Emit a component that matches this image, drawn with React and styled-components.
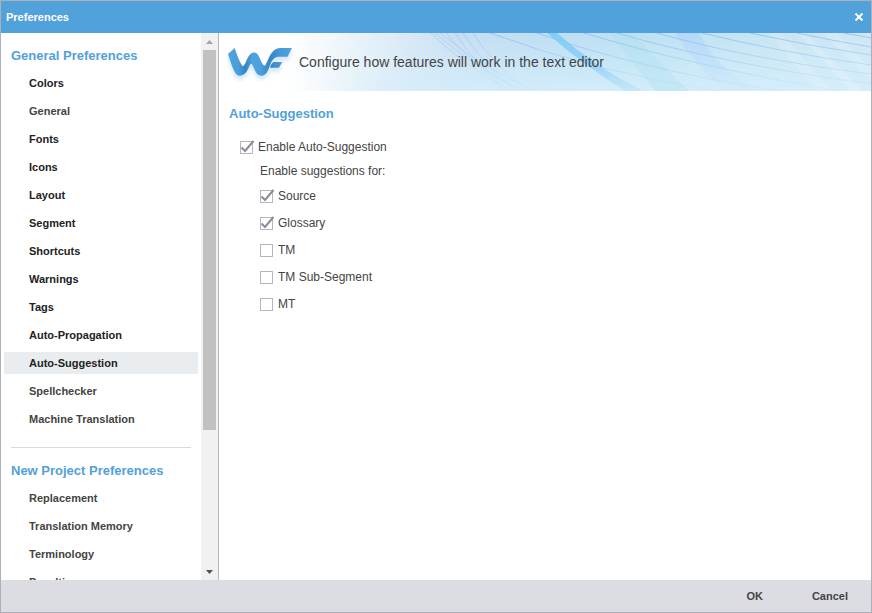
import React, { useState } from 'react'
import styled, { createGlobalStyle } from 'styled-components'

const GlobalStyle = createGlobalStyle`
  * {
    box-sizing: border-box;
  }

  body {
    margin: 0;
    color: #444444;
    font-family: 'Liberation Sans', Arial, sans-serif;
    font-size: 12px;
  }
`

const Dialog = styled.div`
  display: flex;
  flex-direction: column;
  height: 100vh;
  border: 1px solid #aeafb9;
  background-color: white;
`

const TitleBar = styled.header`
  display: flex;
  align-items: center;
  justify-content: space-between;
  height: 32px;
  padding: 0 7px 0 5px;
  flex-shrink: 0;
  background-color: #51a1db;
  color: white;
`

const Title = styled.h1`
  margin: 0;
  font-size: 11px;
  line-height: 14px;
`

const CloseButton = styled.button`
  display: flex;
  padding: 0;
  border: none;
  background: none;
  color: white;
  cursor: pointer;
`

const Body = styled.div`
  display: flex;
  flex: 1;
  min-height: 0;
`

const Sidebar = styled.aside`
  display: flex;
  width: 218px;
  flex-shrink: 0;
  border-right: 1px solid #b4b5c0;
`

const Nav = styled.nav`
  flex: 1;
  padding: 12px 3px 0;
  overflow-y: auto;
  scrollbar-width: none;
`

const Heading = styled.h2`
  margin: 0;
  color: #51a1db;
  font-size: 13px;
  line-height: 22px;
`

const NavHeading = styled(Heading)`
  padding-left: 7px;
`

const NavList = styled.ul`
  display: flex;
  flex-direction: column;
  gap: 6px;
  margin: 5px 0 0;
  padding: 0;
  list-style: none;
`

const NavLink = styled.a`
  display: block;
  padding-left: 25px;
  background-color: ${props => (props.$active ? '#e9edf0' : 'transparent')};
  color: ${props => (props.$dark ? '#222222' : '#444444')};
  font-size: 11px;
  font-weight: bold;
  line-height: 22px;
  text-decoration: none;
`

const Divider = styled.hr`
  height: 1px;
  margin: 17px 7px 12px;
  border: none;
  background-color: #d9dadd;
`

const ScrollTrack = styled.div`
  display: flex;
  flex-direction: column;
  align-items: center;
  width: 17px;
  background-color: #f1f1f1;
`

const ScrollArrow = styled.button`
  display: flex;
  align-items: center;
  justify-content: center;
  width: 17px;
  height: 17px;
  padding: 0;
  border: none;
  background: none;
  color: ${props => (props.disabled ? '#a3a3a3' : '#505050')};
`

const ScrollRail = styled.div`
  flex: 1;
  width: 13px;
`

const ScrollThumb = styled.div`
  height: 74%;
  background-color: #c1c1c1;
`

const Main = styled.main`
  flex: 1;
  min-width: 0;
`

const Banner = styled.div`
  display: flex;
  align-items: center;
  gap: 5px;
  position: relative;
  height: 58px;
  padding-left: 7px;
  overflow: hidden;
`

const BannerArt = styled.svg`
  position: absolute;
  inset: 0;
  width: 100%;
  height: 100%;
`

const LogoMark = styled.svg`
  position: relative;
  flex-shrink: 0;
`

const BannerText = styled.p`
  position: relative;
  margin: 0;
  font-size: 14px;
  line-height: 20px;
`

const Section = styled.section`
  padding: 12px 10px;
`

const Options = styled.div`
  display: flex;
  flex-direction: column;
  align-items: flex-start;
  gap: 4px;
  padding: 12px 0 0 11px;
`

const SubOptions = styled.fieldset`
  display: flex;
  flex-direction: column;
  align-items: flex-start;
  gap: 7px;
  margin: 0;
  padding: 0 0 0 20px;
  border: none;
`

const Legend = styled.legend`
  margin-bottom: 5px;
  padding: 0;
  line-height: 20px;
`

const CheckLabel = styled.label`
  display: flex;
  align-items: center;
  gap: 5px;
  line-height: 20px;
`

const CheckMark = styled.span`
  display: grid;

  > * {
    grid-area: 1 / 1;
  }
`

const CheckInput = styled.input`
  appearance: none;
  width: 13px;
  height: 13px;
  margin: 1px 0 0;
  border: 1px solid #b4b5c0;
  background-color: white;
`

const Tick = styled.svg`
  pointer-events: none;
  overflow: visible;
`

const Footer = styled.footer`
  display: flex;
  align-items: center;
  justify-content: flex-end;
  gap: 49px;
  height: 32px;
  padding-right: 23px;
  flex-shrink: 0;
  background-color: #dcdde2;
`

const FooterButton = styled.button`
  padding: 0;
  border: none;
  background: none;
  color: #444444;
  font-family: inherit;
  font-size: 11px;
  font-weight: bold;
  line-height: 20px;
`

const generalItems = [
  { name: 'Colors', dark: true },
  { name: 'General' },
  { name: 'Fonts', dark: true },
  { name: 'Icons', dark: true },
  { name: 'Layout', dark: true },
  { name: 'Segment', dark: true },
  { name: 'Shortcuts', dark: true },
  { name: 'Warnings', dark: true },
  { name: 'Tags', dark: true },
  { name: 'Auto-Propagation', dark: true },
  { name: 'Auto-Suggestion', dark: true },
  { name: 'Spellchecker' },
  { name: 'Machine Translation' }
]

const projectItems = [
  { name: 'Replacement' },
  { name: 'Translation Memory' },
  { name: 'Terminology' },
  { name: 'Penalties' }
]

// steep lines that cross behind the banner text
const bundleLines = [
  'M212 0 Q244 32 292 58',
  'M216 0 Q252 32 304 58',
  'M221 0 Q262 34 316 58',
  'M227 0 Q250 30 300 58',
  'M236 0 Q256 30 286 58',
  'M244 0 Q264 32 298 58',
  'M254 0 Q272 30 310 58'
]

// flatter lines that sweep to the right edge
const sweepLines = [
  'M271 0 Q380 40 500 58',
  'M318 0 Q420 36 560 58',
  'M365 0 Q470 32 620 58',
  'M398 0 Q500 30 652 51',
  'M438 0 Q530 26 652 41',
  'M483 0 Q560 19 652 32',
  'M531 0 Q590 13 652 22',
  'M578 0 Q615 8 652 14',
  'M625 0 L652 5'
]

function NavGroup({ title, items, active }) {
  return (
    <>
      <NavHeading>{title}</NavHeading>
      <NavList>
        {items.map(({ name, dark }) => (
          <li key={name}>
            <NavLink href='#' $dark={dark} $active={name === active}>
              {name}
            </NavLink>
          </li>
        ))}
      </NavList>
    </>
  )
}

function Scrollbar() {
  return (
    <ScrollTrack>
      <ScrollArrow aria-label='Scroll up' disabled>
        <svg width='7' height='4'>
          <path d='M0 4 L3.5 0 L7 4 Z' fill='currentColor' />
        </svg>
      </ScrollArrow>
      <ScrollRail>
        <ScrollThumb />
      </ScrollRail>
      <ScrollArrow aria-label='Scroll down'>
        <svg width='7' height='4'>
          <path d='M0 0 L3.5 4 L7 0 Z' fill='currentColor' />
        </svg>
      </ScrollArrow>
    </ScrollTrack>
  )
}

function Checkbox({ label, defaultChecked = false }) {
  const [checked, setChecked] = useState(defaultChecked)

  return (
    <CheckLabel>
      <CheckMark>
        <CheckInput
          type='checkbox'
          checked={checked}
          onChange={e => setChecked(e.target.checked)}
        />
        {checked && (
          <Tick width='13' height='14' viewBox='0 0 13 14' fill='none'>
            <path d='M1.5 7.5 L5 11 L13.5 1' stroke='#8b8c96' strokeWidth='2' />
          </Tick>
        )}
      </CheckMark>
      {label}
    </CheckLabel>
  )
}

function Logo() {
  return (
    <LogoMark width='68' height='40' viewBox='0 0 68 40' aria-hidden='true'>
      <defs>
        <linearGradient id='logo' gradientUnits='userSpaceOnUse' x1='2' y1='0' x2='66' y2='0'>
          <stop offset='0' stopColor='#4fa3df' />
          <stop offset='0.16' stopColor='#4a9edb' />
          <stop offset='0.27' stopColor='#3784c1' />
          <stop offset='0.38' stopColor='#4fa3df' />
          <stop offset='0.52' stopColor='#4a9edb' />
          <stop offset='0.66' stopColor='#3784c1' />
          <stop offset='0.8' stopColor='#4598d5' />
          <stop offset='1' stopColor='#4fa3df' />
        </linearGradient>
        <filter id='soft' x='-20%' y='-20%' width='140%' height='150%'>
          <feGaussianBlur stdDeviation='2' />
        </filter>
        <g id='mark'>
          <path d='M2 12 L8.7 6 C11 13 13 19 16 23.5 C17.3 25 18.4 23 19.5 21 C22 15 24 10.5 28 10.5 C32 10.5 33 15 35 19 C37 23.5 38.5 25 40 22 C43 16 46 6 54 6 H66 L61.5 14.8 H53 C47 15 45 20 43 26 C41 31 39 33.7 35.5 33.7 C31 33.7 29 29 27 24 C25.5 20.5 24.5 21 23 25 C21 30 18 33.7 13.5 33.7 C8.5 33.7 6 24 2 12 Z' />
          <path d='M48 20 H56.3 L53 25.7 H44 Q45 21 48 20 Z' />
        </g>
      </defs>
      <use href='#mark' y='4' fill='#9fcdf0' opacity='0.5' filter='url(#soft)' />
      <use href='#mark' fill='url(#logo)' />
    </LogoMark>
  )
}

function BannerBackground() {
  return (
    <BannerArt viewBox='0 0 652 58' preserveAspectRatio='none' aria-hidden='true'>
      <defs>
        <linearGradient id='sky'>
          <stop offset='0.1' stopColor='#ffffff' />
          <stop offset='0.2' stopColor='#edf5fb' />
          <stop offset='0.37' stopColor='#c8dff2' />
          <stop offset='0.5' stopColor='#bfdff3' />
          <stop offset='0.65' stopColor='#bce2f3' />
          <stop offset='0.85' stopColor='#c8e6f3' />
          <stop offset='1' stopColor='#cfe8f5' />
        </linearGradient>
        <linearGradient id='glow' x1='0' y1='0' x2='0' y2='1'>
          <stop offset='0' stopColor='#d6eefb' stopOpacity='0' />
          <stop offset='1' stopColor='#d6eefb' stopOpacity='0.85' />
        </linearGradient>
        <linearGradient id='glowMask'>
          <stop offset='0.15' stopColor='black' />
          <stop offset='0.35' stopColor='white' />
        </linearGradient>
        <mask id='fade'>
          <rect width='652' height='58' fill='url(#glowMask)' />
        </mask>
        <linearGradient id='ribbon' x1='0' y1='0' x2='0' y2='1'>
          <stop offset='0' stopColor='#83cbf6' />
          <stop offset='0.5' stopColor='#92d2f8' />
          <stop offset='1' stopColor='#b5e0f8' stopOpacity='0.5' />
        </linearGradient>
        <linearGradient id='line' gradientUnits='userSpaceOnUse' x1='0' y1='0' x2='0' y2='58'>
          <stop offset='0' stopColor='#8fb8f3' />
          <stop offset='1' stopColor='#a8cbf5' stopOpacity='0.15' />
        </linearGradient>
        <linearGradient id='haze' x1='0' y1='0' x2='0' y2='1'>
          <stop offset='0' stopColor='#aed4fb' stopOpacity='0.7' />
          <stop offset='1' stopColor='#bfdefc' stopOpacity='0.1' />
        </linearGradient>
      </defs>
      <rect width='652' height='58' fill='url(#sky)' />
      <rect width='652' height='58' fill='url(#glow)' mask='url(#fade)' />
      <path d='M390 0 H412 L470 58 H436 Z' fill='#ade0ef' opacity='0.35' />
      <path d='M456 0 H480 Q496 34 538 58 H506 Q476 34 456 0 Z' fill='url(#haze)' />
      <path d='M550 0 H562 L612 58 H596 Z' fill='white' opacity='0.14' />
      <path d='M578 0 H586 L644 58 H632 Z' fill='white' opacity='0.18' />
      <path d='M604 0 H618 L652 36 V48 Z' fill='white' opacity='0.14' />
      <g fill='none' stroke='url(#line)' opacity='0.55'>
        {bundleLines.map(d => (
          <path key={d} d={d} />
        ))}
      </g>
      <g fill='none' stroke='url(#line)' opacity='0.8'>
        {sweepLines.map(d => (
          <path key={d} d={d} />
        ))}
      </g>
      <path d='M328 0 H338 Q376 34 424 58 H406 Q364 32 328 0 Z' fill='url(#ribbon)' />
    </BannerArt>
  )
}

export default function App() {
  return (
    <>
      <GlobalStyle />
      <Dialog>
        <TitleBar>
          <Title>Preferences</Title>
          <CloseButton aria-label='Close'>
            <svg width='10' height='8' viewBox='0 0 10 8' fill='none'>
              <path d='M1.5 0.5 L8.5 7.5 M8.5 0.5 L1.5 7.5' stroke='white' strokeWidth='2' />
            </svg>
          </CloseButton>
        </TitleBar>
        <Body>
          <Sidebar>
            <Nav>
              <NavGroup
                title='General Preferences'
                items={generalItems}
                active='Auto-Suggestion'
              />
              <Divider />
              <NavGroup title='New Project Preferences' items={projectItems} />
            </Nav>
            <Scrollbar />
          </Sidebar>
          <Main>
            <Banner>
              <BannerBackground />
              <Logo />
              <BannerText>
                Configure how features will work in the text editor
              </BannerText>
            </Banner>
            <Section>
              <Heading>Auto-Suggestion</Heading>
              <Options>
                <Checkbox label='Enable Auto-Suggestion' defaultChecked />
                <SubOptions>
                  <Legend>Enable suggestions for:</Legend>
                  <Checkbox label='Source' defaultChecked />
                  <Checkbox label='Glossary' defaultChecked />
                  <Checkbox label='TM' />
                  <Checkbox label='TM Sub-Segment' />
                  <Checkbox label='MT' />
                </SubOptions>
              </Options>
            </Section>
          </Main>
        </Body>
        <Footer>
          <FooterButton>OK</FooterButton>
          <FooterButton>Cancel</FooterButton>
        </Footer>
      </Dialog>
    </>
  )
}
